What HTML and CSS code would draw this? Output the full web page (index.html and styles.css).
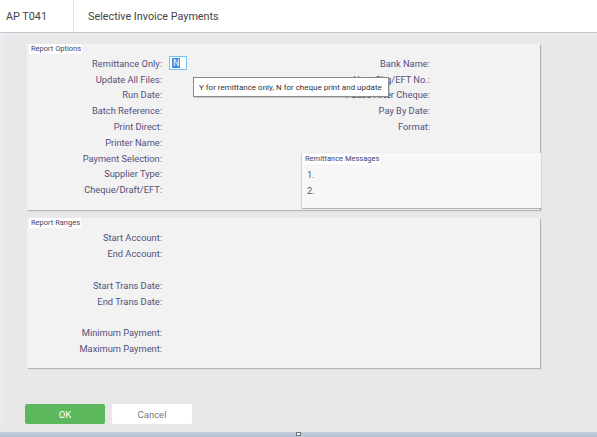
FILE: index.html
```html
<!DOCTYPE html>
<html>
<head>
<meta charset="utf-8">
<link rel="stylesheet" href="styles.css">
</head>
<body>
<div class="app">
  <header class="topbar">
    <div class="code">AP T041</div>
    <div class="title">Selective Invoice Payments</div>
  </header>
  <main class="main">
    <section class="panel options">
      <div class="legend">Report Options</div>
      <div class="cols">
        <div class="col-left">
          <div class="row"><span class="label">Remittance Only:</span><span class="input"><span class="sel">N</span></span></div>
          <div class="row"><span class="label">Update All Files:</span></div>
          <div class="row"><span class="label">Run Date:</span></div>
          <div class="row"><span class="label">Batch Reference:</span></div>
          <div class="row"><span class="label">Print Direct:</span></div>
          <div class="row"><span class="label">Printer Name:</span></div>
          <div class="row"><span class="label">Payment Selection:</span></div>
          <div class="row"><span class="label">Supplier Type:</span></div>
          <div class="row"><span class="label">Cheque/Draft/EFT:</span></div>
        </div>
        <div class="col-right">
          <div class="row"><span class="label rlabel">Bank Name:</span></div>
          <div class="row"><span class="label rlabel">Next Chq/EFT No.:</span></div>
          <div class="row"><span class="label rlabel">Pause After Cheque:</span></div>
          <div class="row"><span class="label rlabel">Pay By Date:</span></div>
          <div class="row"><span class="label rlabel">Format:</span></div>
          <div class="messages">
            <div class="legend">Remittance Messages</div>
            <div class="msg">1.</div>
            <div class="msg">2.</div>
          </div>
        </div>
      </div>
      <div class="tooltip">Y for remittance only, N for cheque print and update</div>
    </section>
    <section class="panel ranges">
      <div class="legend">Report Ranges</div>
      <div class="col-left">
        <div class="row"><span class="label">Start Account:</span></div>
        <div class="row"><span class="label">End Account:</span></div>
        <div class="row"></div>
        <div class="row"><span class="label">Start Trans Date:</span></div>
        <div class="row"><span class="label">End Trans Date:</span></div>
        <div class="row"></div>
        <div class="row"><span class="label">Minimum Payment:</span></div>
        <div class="row"><span class="label">Maximum Payment:</span></div>
      </div>
    </section>
    <div class="buttons">
      <button class="btn ok">OK</button>
      <button class="btn cancel">Cancel</button>
    </div>
  </main>
  <footer class="bottombar"><span class="handle"></span></footer>
</div>
</body>
</html>
```
FILE: styles.css
```css
* { box-sizing: border-box; }
html, body { margin: 0; padding: 0; }
body {
  width: 597px;
  height: 437px;
  overflow: hidden;
  font-family: Roboto, "Liberation Sans", sans-serif;
  background: #e8e8e8;
}
.app { display: flex; flex-direction: column; height: 437px; }
.topbar {
  height: 33px;
  background: #fff;
  border-bottom: 1px solid #c9c9c9;
  display: flex;
  align-items: center;
  font-size: 10.8px;
  color: #444;
}
.code {
  width: 74px;
  height: 100%;
  display: flex;
  align-items: center;
  padding-left: 6px;
  border-right: 1px solid #e4e4e4;
}
.title { padding-left: 14px; }
.main {
  flex: 1;
  background: #e8e8e8;
  border-left: 5px solid #ebebf0;
  border-top: 3px solid #eaeaf0;
  padding: 8px 57px 0 22px;
  display: flex;
  flex-direction: column;
}
.panel {
  position: relative;
  background: #f2f2f2;
  box-shadow: 1px 1px 1px rgba(0,0,0,0.22);
  width: 513px;
  font-size: 9px;
}
.legend {
  display: block;
  width: fit-content;
  background: #fff;
  font-size: 7.5px;
  color: #3f3d6e;
  padding: 1px 1px 1px 2px;
  line-height: 8px;
  margin-left: 2px;
}
.options { height: 166px; }
.cols { display: flex; }
.col-left { width: 275px; padding-top: 1.5px; }
.col-right { flex: 1; display: flex; flex-direction: column; padding-top: 1.5px; }
.row {
  height: 15.8px;
  display: flex;
  align-items: center;
  font-size: 9.3px;
  color: #53517a;
}
.label {
  width: 135px;
  text-align: right;
  white-space: nowrap;
}
.rlabel { width: 128px; }
.input {
  margin-left: 7px;
  width: 18px;
  height: 14px;
  border: 1px solid #74c3f2;
  background: #fff;
  display: flex;
  align-items: center;
  padding-left: 2px;
}
.sel {
  background: #3a8ee6;
  color: #fff;
  font-size: 9px;
  line-height: 10px;
  padding: 0 1px;
}
.messages {
  margin-top: 19px;
  background: #f7f7f7;
  box-shadow: 0 1px 1px rgba(0,0,0,0.25), -1px 0 1px rgba(0,0,0,0.08);
  height: 55px;
  margin-right: -1px;
  padding-top: 1px;
}
.messages .legend { margin-left: 1px; margin-bottom: 2px; }
.msg {
  font-size: 9.3px;
  color: #53517a;
  padding-left: 5px;
  height: 15.8px;
  display: flex;
  align-items: center;
}
.tooltip {
  position: absolute;
  left: 166px;
  top: 33px;
  width: 196px;
  height: 20px;
  background: #fff;
  border: 1px solid #8a8a8a;
  box-shadow: 1px 1px 1px rgba(0,0,0,0.15);
  font-size: 8px;
  color: #333;
  display: flex;
  align-items: center;
  padding-left: 5px;
  white-space: nowrap;
}
.ranges { margin-top: 8px; height: 150px; }
.ranges .col-left { padding-top: 2px; }
.buttons {
  margin-top: 36px;
  margin-left: -2px;
  display: flex;
  gap: 7px;
}
.btn {
  width: 80px;
  height: 20px;
  border: none;
  border-radius: 2px;
  font-family: Roboto, "Liberation Sans", sans-serif;
  font-size: 9.5px;
  padding: 0;
}
.ok { background: #5cb85c; color: #fff; }
.cancel { background: #fff; color: #777; }
.bottombar {
  height: 5px;
  background: linear-gradient(#c5cfdc, #b2c0d2);
  position: relative;
  margin-top: 8px;
}
.handle {
  position: absolute;
  left: 296px;
  top: 0;
  width: 5px;
  height: 4px;
  background: #eee;
  border: 1px solid #777;
}
```
